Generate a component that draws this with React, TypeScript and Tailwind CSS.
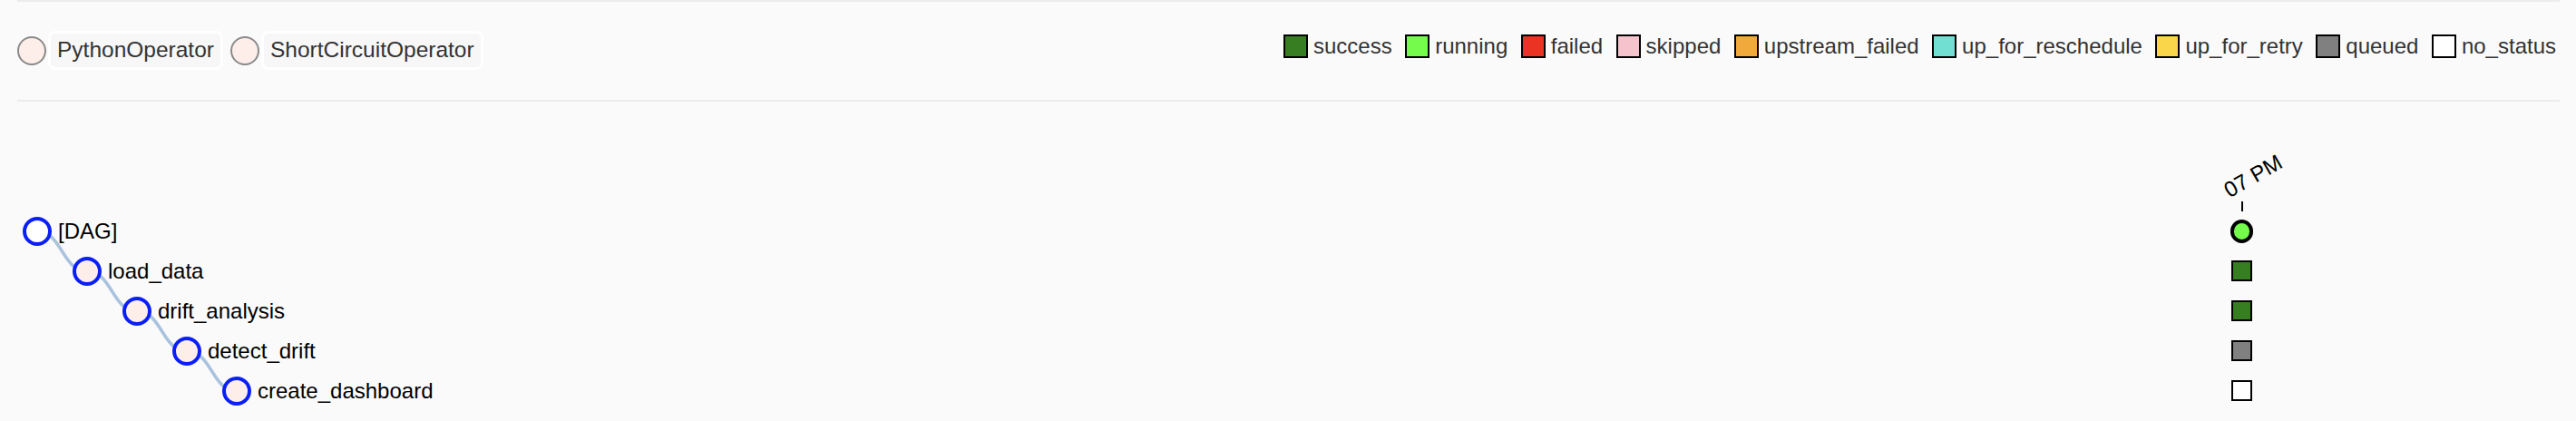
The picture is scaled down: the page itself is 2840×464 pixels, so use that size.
import React from "react";

const legend = [
  { label: "success", cls: "bg-[#377e22]" },
  { label: "running", cls: "bg-[#75fb4c]" },
  { label: "failed", cls: "bg-[#ea3323]" },
  { label: "skipped", cls: "bg-[#f6c2cb]" },
  { label: "upstream_failed", cls: "bg-[#f2a93b]" },
  { label: "up_for_reschedule", cls: "bg-[#72dfd3]" },
  { label: "up_for_retry", cls: "bg-[#fad74a]" },
  { label: "queued", cls: "bg-[#808080]" },
  { label: "no_status", cls: "bg-white" },
];

const rows = [
  { label: "[DAG]", indent: "pl-[25px]", fill: "bg-white", status: "circle", sCls: "bg-[#75fb4c]" },
  { label: "load_data", indent: "pl-[80px]", fill: "bg-[#fdeeea]", status: "square", sCls: "bg-[#377e22]" },
  { label: "drift_analysis", indent: "pl-[135px]", fill: "bg-[#fdeeea]", status: "square", sCls: "bg-[#377e22]" },
  { label: "detect_drift", indent: "pl-[190px]", fill: "bg-[#fdeeea]", status: "square", sCls: "bg-[#808080]" },
  { label: "create_dashboard", indent: "pl-[245px]", fill: "bg-[#fdeeea]", status: "square", sCls: "bg-white" },
];

function Links() {
  const pts = rows.map((_, i) => [41 + 55 * i, 22 + 44 * i]);
  const paths: string[] = [];
  for (let i = 0; i < pts.length - 1; i++) {
    const [x0, y0] = pts[i];
    const [x1, y1] = pts[i + 1];
    const mx = (x0 + x1) / 2;
    paths.push(`M${x0},${y0} C${mx},${y0} ${mx},${y1} ${x1},${y1}`);
  }
  return (
    <svg className="absolute left-0 top-0 pointer-events-none" width={320} height={230}>
      {paths.map((d, i) => (
        <path key={i} d={d} fill="none" stroke="#a9c3df" strokeWidth={3.5} />
      ))}
    </svg>
  );
}

export default function App() {
  return (
    <div className="w-full h-[464px] bg-[#fafafa] font-['Liberation_Sans',Arial,sans-serif] overflow-hidden">
      <div className="ml-[19px] mr-[18px] h-[2px] bg-[#ececec]" />
      <div className="h-[108px] flex justify-between pl-[19px] pr-[22px]">
        <div className="flex items-center gap-[8px] pt-[32px] self-start">
          {["PythonOperator", "ShortCircuitOperator"].map((op) => (
            <div key={op} className="flex items-center gap-[2px]">
              <div className="w-[32px] h-[32px] rounded-full border-2 border-[#8a8a8a] bg-[#fdeeea]" />
              <div className="h-[43px] flex items-center px-[7px] border-[3px] border-white rounded-[8px] bg-[#f7f7f7] text-[24.5px] text-[#333]">
                {op}
              </div>
            </div>
          ))}
        </div>
        <div className="flex items-center gap-[14.5px] pt-[36px] self-start">
          {legend.map((l) => (
            <div key={l.label} className="flex items-center gap-[6px]">
              <div className={`w-[27px] h-[26px] border-[2.5px] border-black ${l.cls}`} />
              <span className="text-[24px] leading-[26px] text-[#333]">{l.label}</span>
            </div>
          ))}
        </div>
      </div>
      <div className="ml-[19px] mr-[18px] h-[2px] bg-[#ececec]" />
      <div className="flex h-[120.5px]">
        <div className="w-[2459px]" />
        <div className="relative w-[25px] flex flex-col justify-end items-center">
          <span className="absolute left-[1px] bottom-[11px] origin-bottom-left -rotate-30 whitespace-nowrap text-[24px] leading-none text-black">
            07 PM
          </span>
          <div className="w-[2px] h-[11px] bg-black" />
        </div>
      </div>
      <div className="relative">
        <Links />
        {rows.map((r) => (
          <div key={r.label} className="relative flex items-center h-[44px]">
            <div className={`w-[2459px] flex items-center ${r.indent}`}>
              <div className={`w-[32px] h-[32px] rounded-full border-4 border-[#0a1ff8] ${r.fill}`} />
              <span className="ml-[7px] text-[24px] text-black leading-none">{r.label}</span>
            </div>
            <div className="w-[25px] flex justify-center">
              {r.status === "circle" ? (
                <div className={`w-[26px] h-[26px] rounded-full border-4 border-black ${r.sCls}`} />
              ) : (
                <div className={`w-[23px] h-[23px] border-[2.5px] border-black ${r.sCls}`} />
              )}
            </div>
          </div>
        ))}
      </div>
    </div>
  );
}
